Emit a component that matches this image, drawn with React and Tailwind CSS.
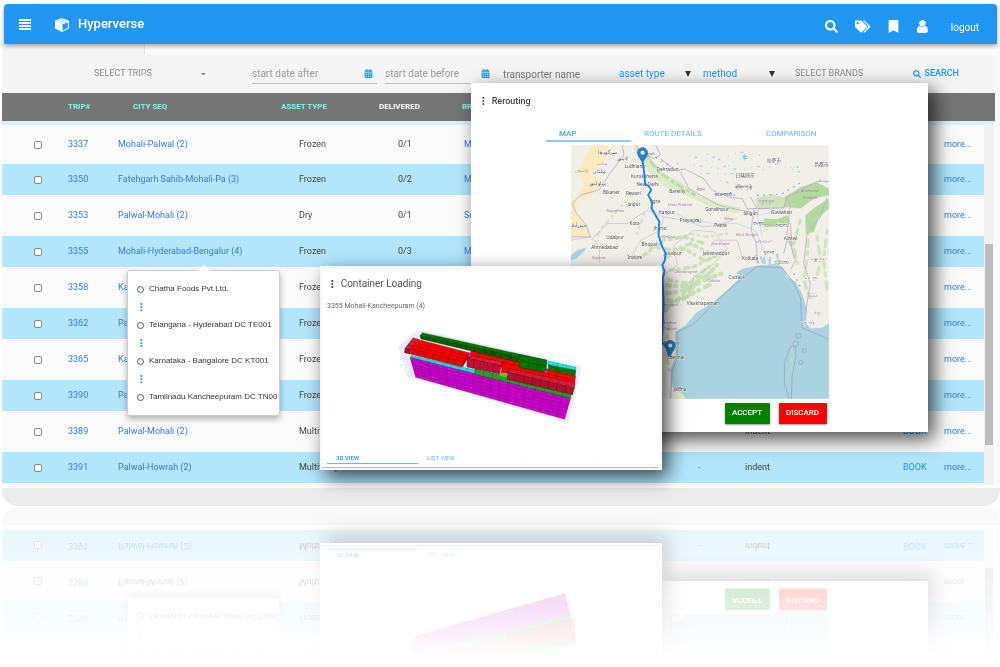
import React, { useState } from 'react';
import { FaSearch, FaTags, FaBookmark, FaCalendarAlt } from 'react-icons/fa';

const trips = [
  { id: 3337, city: 'Mohali-Palwal (2)', asset: 'Frozen', delivered: '0/1', brand: 'Mother' },
  { id: 3350, city: 'Fatehgarh Sahib-Mohali-Pa (3)', asset: 'Frozen', delivered: '0/2', brand: 'Mother' },
  { id: 3353, city: 'Palwal-Mohali (2)', asset: 'Dry', delivered: '0/1', brand: 'Subway' },
  { id: 3355, city: 'Mohali-Hyderabad-Bengalur (4)', asset: 'Frozen', delivered: '0/3', brand: 'Mother' },
  { id: 3358, city: 'Kashipur-Palwal (2)', asset: 'Frozen', delivered: '0/1', brand: 'Mother' },
  { id: 3362, city: 'Palwal-Mohali (2)', asset: 'Frozen', delivered: '0/1', brand: 'Mother' },
  { id: 3365, city: 'Kashipur-Palwal (2)', asset: 'Frozen', delivered: '0/1', brand: 'Mother' },
  { id: 3390, city: 'Palwal-Mohali (2)', asset: 'Frozen', delivered: '0/1', brand: 'Mother' },
  { id: 3389, city: 'Palwal-Mohali (2)', asset: 'Multitemp', delivered: '0/1', brand: 'Mother' },
  { id: 3391, city: 'Palwal-Howrah (2)', asset: 'Multitemp', delivered: '0/1', brand: 'Mother' },
];

const stops = [
  'Chatha Foods Pvt.Ltd.',
  'Telangana - Hyderabad DC TE001',
  'Karnataka - Bangalore DC KT001',
  'Tamilnadu Kancheepuram DC TN00',
];

// [name, x, y]
const cities = [
  ['Ludhiana', 192, 82], ['Dehradun', 288, 92], ['Kurukshetra', 211, 113], ['New Delhi', 228, 136],
  ['Bikaner', 127, 160], ['Rewari', 196, 163], ['Bareilly', 326, 159], ['Agra', 268, 188],
  ['Jaipur', 201, 196], ['Kanpur', 295, 222], ['Gorakhpur', 434, 213], ['Prayagraj', 358, 245],
  ['Kota', 207, 254], ['Jhansi', 279, 269], ['Patna', 461, 260], ['Siliguri', 549, 224],
  ['Guwahati', 632, 221], ['Udaipur', 137, 296], ['Bhopal', 243, 317], ['Jabalpur', 309, 344],
  ['Jamshedpur', 427, 344], ['Ahmedabad', 92, 325], ['Indore', 201, 356], ['Kolkata', 545, 360],
  ['Aizawl', 670, 300], ['Cuttack', 504, 417], ['Visakhapatnam', 379, 494], ['Chennai', 318, 658],
  ['Nellore', 310, 615], ['Jaffna', 340, 752], ['拉萨市', 620, 65], ['日喀则市', 526, 109], ['昌都市', 762, 77],
  ['سرگودھا', 112, 42], ['لاہور', 170, 58], ['ملتان', 97, 97], ['بہاولپور', 86, 135],
  ['حیدرآباد', 31, 260], ['གཞིས་ཀ་རྩེ', 524, 145], ['काठमाण्डौ', 462, 167], ['রংপুর', 578, 255], ['সিলেট', 648, 261],
  ['খুলনা', 608, 340], ['চট্টগ্রাম', 645, 372], ['မန္တလေး', 750, 358], ['မကွေး', 732, 417], ['ရန်ကုန်', 722, 553], ['ပဲခူး', 762, 521],
];

const states = [
  ['Punjab', 245, 45], ['پنجاب', 110, 73], ['پاکستان', 42, 95], ['Rajasthan', 138, 215], ['Uttar Pradesh', 322, 197],
  ['Bihar', 491, 240], ['West Bengal', 526, 288], ['Jharkhand', 452, 314], ['Madhya', 302, 293],
  ['Gujarat', 94, 355], ['Chhattisgarh', 342, 400], ['Odisha', 442, 425],
  ['Telangana', 296, 498], ['Andhra', 308, 551], ['Pradesh', 308, 571], ['Arunachal', 722, 156], ['Pradesh', 728, 176],
  ['नेपाल', 408, 152], ['འབྲུག་ཡུལ', 592, 188], ['বাংলাদেশ', 586, 308], ['မြန်မာ', 745, 470],
];

const lerp = (a, b, t) => [a[0] + (b[0] - a[0]) * t, a[1] + (b[1] - a[1]) * t];

// One face of stacked cartons: corners clockwise from top left, with grid lines
const Face = ({ pts, fill, cols = 1, rows = 1 }) => {
  const [tl, tr, br, bl] = pts;
  const lines = [];
  for (let i = 1; i < cols; i++) {
    lines.push([lerp(tl, tr, i / cols), lerp(bl, br, i / cols)]);
  }
  for (let i = 1; i < rows; i++) {
    lines.push([lerp(tl, bl, i / rows), lerp(tr, br, i / rows)]);
  }
  return (
    <g stroke="#000" strokeOpacity="0.5" strokeWidth="1.2">
      <polygon points={pts.map((p) => p.join(',')).join(' ')} fill={fill} />
      {lines.map(([a, b], i) => (
        <line key={i} x1={a[0]} y1={a[1]} x2={b[0]} y2={b[1]} />
      ))}
    </g>
  );
};

const LoadDrawing = () => (
  <svg viewBox="0 0 570 330" className="w-[190px]" role="img" aria-label="Loaded container">
    <polygon points="70,28 560,138 522,307 38,170 12,80" fill="#e9eef9" />
    <path d="M70 28 48 44 12 80 38 170 62 172M24 78 50 168M40 56 66 160" fill="none" stroke="#d5dbee" strokeWidth="1.5" />
    <Face pts={[[48, 106], [240, 150], [240, 163], [48, 116]]} fill="#00e5e5" cols={8} />
    <Face pts={[[45, 112], [527, 234], [509, 298], [62, 172]]} fill="#cc00cc" cols={18} rows={6} />
    <Face pts={[[240, 146], [530, 218], [527, 235], [240, 163]]} fill="#21a121" cols={11} />
    <Face pts={[[230, 90], [542, 168], [538, 196], [216, 116]]} fill="#ff0000" cols={12} rows={2} />
    <Face pts={[[322, 128], [380, 140], [345, 160], [318, 160]]} fill="#ff0000" cols={2} rows={2} />
    <Face pts={[[82, 38], [455, 120], [453, 132], [75, 48]]} fill="#067306" cols={14} />
    <Face pts={[[75, 47], [375, 113], [372, 127], [78, 57]]} fill="#005c00" cols={11} />
    <Face pts={[[375, 104], [456, 121], [453, 158], [372, 142]]} fill="#067306" cols={3} rows={2} />
    <Face pts={[[460, 123], [543, 142], [542, 152], [458, 134]]} fill="#00f0f0" cols={3} />
    <Face pts={[[460, 134], [542, 151], [541, 167], [460, 151]]} fill="#067306" cols={3} />
    <rect x="450" y="150" width="6" height="9" fill="#f0f" />
    <rect x="222" y="99" width="5" height="9" fill="#f0f" />
    <Face pts={[[230, 108], [322, 126], [318, 138], [218, 116]]} fill="#e02040" cols={5} />
    <Face pts={[[217, 114], [318, 137], [315, 163], [215, 141]]} fill="#bd1236" cols={5} />
    <polygon points="314,160 336,163 336,173 314,168" fill="#49d018" />
    <Face pts={[[346, 146], [540, 189], [538, 205], [338, 158]]} fill="#d51c3c" cols={8} />
    <Face pts={[[338, 156], [538, 204], [533, 224], [336, 178]]} fill="#b10f30" cols={8} />
    <Face pts={[[64, 57], [222, 98], [206, 126], [44, 88]]} fill="#ff0000" cols={7} rows={3} />
    <Face pts={[[46, 87], [206, 125], [202, 141], [46, 102]]} fill="#ef0000" cols={7} />
    <Face pts={[[222, 97], [218, 116], [202, 141], [206, 124]]} fill="#c80000" cols={2} />
    <Face pts={[[54, 53], [70, 58], [44, 89], [30, 85]]} fill="#d41f42" rows={3} />
    <Face pts={[[30, 85], [45, 88], [45, 103], [28, 98]]} fill="#a80f2e" />
  </svg>
);

const Pin = ({ x, y }) => (
  <g transform={`translate(${x} ${y})`}>
    <path d="M0 0C-2-13-15-21-15-34a15 15 0 0 1 30 0C15-21 2-13 0 0Z" fill="#2a81cb" stroke="#1f6fae" strokeWidth="2" />
    <circle cx="0" cy="-34" r="6" fill="#fff" />
  </g>
);

const RouteMap = () => (
  <svg viewBox="31 14 775 762" className="mx-auto block w-[258px]" role="img" aria-label="Route map">
    <rect x="31" y="14" width="775" height="762" fill="#f2efe9" />
    {/* Desert and forest cover */}
    <path d="M95 14h50l-15 45-45 45 50 15-25 30-35 30-25-5 20-45-20-30zM31 185l25-5-12 30 40 60 5 20-58-2z" fill="#fbe9bf" />
    <path d="M215 20l45 20 40 55 60 30 50 40 70 25 60 12-5 18-75-15-70-35-75-30-50-45z" fill="#dbebc8" />
    <path d="M230 25l30 25 35 45 50 35 60 35" fill="none" stroke="#bcdba4" strokeWidth="9" strokeDasharray="26 9 12 6" />
    <path d="M672 170l50-30 45-15 39 20v20l-45 10-40 30-50-5zM610 235l40 2 30-12 10 20-40 14-40 2zM735 225l30-25 41-25v30l-30 25-15 45-25 5z" fill="#b3d9a1" />
    <path d="M585 175l45-14 45 12-4 30-80 2z" fill="#cfe4bd" />
    <g fill="none" stroke="#bfdfac" strokeLinecap="round">
      <path d="M215 165l-40 40-45 50-25 40M250 220l-20 60M330 300l60-20 50 10 60-10" strokeWidth="8" strokeDasharray="3 17 10 13" opacity="0.6" />
      <path d="M250 345l60-45 60-10 60 20M320 350l50-25 60 35M330 390l70-10 80-40M325 420l60 10 60-50M270 320l70 10 50-20 60 30" strokeWidth="11" strokeDasharray="8 15 2 18 14 12" opacity="0.8" />
      <path d="M320 460l60-10 60-35 60-20M350 480l50-40 30-45M315 510l30-25M320 435l70 5 50-35 30-30M325 480l30 5 40-25 60-30" strokeWidth="13" strokeDasharray="9 15 3 19 16 12" opacity="0.85" />
      <path d="M720 240l-20 70 10 60M745 270l-5 90-10 60 20 60M770 290l10 70-10 50M690 300l15 60M800 270l-10 90 10 90" strokeWidth="9" strokeDasharray="10 18 22 14" opacity="0.7" />
      <path d="M325 560l-10 60 10 70M345 765l25 8" strokeWidth="10" strokeDasharray="8 18" opacity="0.8" />
    </g>
    {/* Lakes and rivers */}
    <g fill="none" stroke="#9fd6e6" strokeWidth="4" strokeDasharray="3 15 8 26 2 19">
      <path d="M385 45l70 20 80-30 70 10M400 75l80 10 60-30M440 40l90 50 90-15M560 110l90-40 80 30M420 100l100 0" />
      <path d="M690 80l50 0M330 60l30 15M480 120l80 25" />
    </g>
    <path d="M545 48h16M548 54h12M552 42v18" stroke="#8accdf" strokeWidth="4" />
    <path d="M310 205l70 30 80 15 70 0 55 20 25 60 20 45M700 190l-50 25-60 10 15 60" fill="none" stroke="#c5dfe9" strokeWidth="3" />
    {/* Sea */}
    <path d="M375 776l-38-35-8-50 15-40 0-75 32-22 30-35 55-35 45-40 32-30-10-17 20-12 50-10 20 0 30-5 20 12 12 28 25 15 20 35 15 50-3 40 15 15 35-3 20-14 19-25V776z" fill="#aad3df" />
    <path d="M31 345l20-15 25-8-5 12-25 22-15 4z" fill="#aad3df" />
    <path d="M337 776l3-15 12-8 15 10 10 13z" fill="#e4ecd2" />
    <path d="M585 345l8 25M610 350l4 22M630 350l-3 24M650 340l5 34M600 348l8 22" stroke="#aad3df" strokeWidth="6" />
    {/* Borders */}
    <g fill="none" stroke="#c0a8c6" strokeWidth="2.5">
      <path d="M185 14l5 30-45 60-30 45-55 15-25 25 12 30 30 35 12 36-58 0M225 14l15 22 40 18 20-10 -15-30M300 55l50 38 20-8 60 30 25 35 50 20 40 5 15 30 60 0M360 95l25 50 90 50 95 22M570 170l20 35 80-2 8-30 55-30 40-20 33 0M580 210l-8 60 15 40 5 60M590 250l50 5 50-5 5 70-15-20-10 40M690 190l-10 90 25 80-15 30M800 170l-20 60-40 50-10 90 20 60-15 90" />
      <path d="M31 300l60-10 25 30 0 45M90 300l50-50 60 0 60-40 50 20-10 40-60 30-30 55M310 230l60 10 60 20 40-5 60-20M400 270l-60 45 10 60-40 30M400 270l60 5 40 50-40 45-60 40-20 60-60 20M460 300l70 0 15 50" strokeWidth="2" opacity="0.75" />
    </g>
    <g fill="none" stroke="#98a6c8" strokeWidth="2.5">
      <path d="M330 776l5-80 15-45 0-75 50-25 60-60 65-60 65-52 75 4 35 45 20 45 5 90 81 35" />
      <path d="M690 620l15 0 2 30-12 60-2 66M690 620l-18 50 0 60 14 46" />
      <circle cx="714" cy="587" r="8" />
      <circle cx="706" cy="611" r="8" />
      <circle cx="732" cy="631" r="6" />
      <circle cx="721" cy="667" r="6" />
    </g>
    <path d="M695 625l-3 40-6 50" fill="none" stroke="#c3d8b8" strokeWidth="5" strokeDasharray="14 12" />
    <path d="M270 40l30 20 50 30 20 0M500 165l30 0M590 165l60-3M665 160l60-35M800 125l-25-5M700 400l22 45" fill="none" stroke="#7eabff" strokeWidth="4" strokeDasharray="5 14" />
    <g fontFamily='"Noto Sans", "Noto Sans CJK SC", sans-serif' fontSize="14">
      <g fill="#a57fae" fontStyle="italic" fontSize="12">
        {states.map(([name, x, y]) => (
          <text key={`${x}-${y}`} x={x} y={y}>{name}</text>
        ))}
      </g>
      <g fill="#444" stroke="#fff" strokeWidth="2" paintOrder="stroke">
        {cities.map(([name, x, y]) => (
          <text key={name} x={x} y={y}>{name}</text>
        ))}
      </g>
    </g>
    {/* Route */}
    <path d="M247 68l4 32 3 33 10 4 8 12-9 15 12 22-2 18 14 25 9 14-2 42 11 35 10 18-2 22-8 16 7 16-6 25 3 70-5 120 14 14 8 28" fill="none" stroke="#2a80ff" strokeWidth="6" strokeLinejoin="round" />
    <Pin x={246} y={71} />
    <Pin x={329} y={650} />
  </svg>
);

const Dots = ({ className }) => (
  <svg viewBox="0 0 3 9" className={className} fill="currentColor" aria-hidden="true">
    <rect width="2" height="2" x="0.5" />
    <rect width="2" height="2" x="0.5" y="3.5" />
    <rect width="2" height="2" x="0.5" y="7" />
  </svg>
);

const MenuIcon = () => (
  <svg viewBox="0 0 12 11" className="w-3" fill="currentColor" aria-hidden="true">
    <path d="M0 0h12v2H0zM0 3h12v2H0zM0 6h12v2H0zM0 9h12v2H0z" />
  </svg>
);

const CubeIcon = () => (
  <svg viewBox="0 0 1792 1792" className="size-[15px]" fill="currentColor" aria-hidden="true">
    <path d="M896 1629l640-349v-636l-640 233v752zm-64-865l698-254-698-254-698 254zm832-252v768q0 35-18 65t-49 47l-704 384q-28 16-61 16t-61-16l-704-384q-31-17-49-47t-18-65v-768q0-40 23-73t61-47l704-256q22-8 44-8t44 8l704 256q38 14 61 47t23 73z" />
    <path d="M832 764l698-254-698-254-698 254z" fillOpacity="0.85" />
  </svg>
);

const UserIcon = () => (
  <svg viewBox="256 128 1280 1536" className="h-[13px]" fill="currentColor" aria-hidden="true">
    <path d="M1536 1399q0 109-62.5 187t-150.5 78h-854q-88 0-150.5-78t-62.5-187q0-85 8.5-160.5t31.5-152 58.5-131 94-89 134.5-34.5q131 128 313 128t313-128q76 0 134.5 34.5t94 89 58.5 131 31.5 152 8.5 160.5zm-256-887q0 159-112.5 271.5t-271.5 112.5-271.5-112.5-112.5-271.5 112.5-271.5 271.5-112.5 271.5 112.5 112.5 271.5z" />
  </svg>
);

const Header = () => (
  <header className="relative z-10 mr-[3px] ml-1 flex h-10 items-center rounded-t bg-[#2196f3] pr-[18px] pl-[15px] text-white shadow-[0_2px_4px_rgba(0,0,0,0.35)]">
    <button aria-label="Menu">
      <MenuIcon />
    </button>
    <a href="#" className="ml-6 flex items-center gap-2 text-[13px] font-medium">
      <CubeIcon />
      Hyperverse
    </a>
    <nav className="ml-auto flex items-center gap-[17px] pt-1">
      <button aria-label="Search"><FaSearch className="size-[13px]" /></button>
      <button aria-label="Tags"><FaTags className="size-[15px]" /></button>
      <button aria-label="Bookmarks"><FaBookmark className="size-[13px]" /></button>
      <button aria-label="User"><UserIcon /></button>
      <a href="#" className="ml-1.5 pt-0.5 text-[10px]">logout</a>
    </nav>
  </header>
);

const DateFilter = ({ label, className }) => (
  <label className={`flex h-5 items-center border-b border-[#bdbdbd] ${className}`}>
    <input type="text" aria-label={label} placeholder={label} className="w-full min-w-0 text-[10px] outline-none placeholder:text-[#9a9a9a]" />
    <FaCalendarAlt className="size-[9px] shrink-0 text-[#2196f3]" />
  </label>
);

const SelectFilter = ({ label }) => (
  <div className="relative h-4 w-[72px]">
    <select aria-label={label} className="block h-4 w-full appearance-none text-[10px] leading-4 text-[#2196f3]">
      <option>{label}</option>
    </select>
    <svg viewBox="0 0 6 6" className="pointer-events-none absolute top-[5px] right-0 size-[6px]" fill="#333" aria-hidden="true">
      <path d="M0 0h6L3 6z" />
    </svg>
  </div>
);

const Filters = () => (
  <form className="flex items-center bg-[#f5f5f5] pt-[9px] pb-[9px] pl-[92px]" onSubmit={(e) => e.preventDefault()}>
    <button type="button" className="flex w-[116px] items-center justify-between text-[9px] text-[#888]">
      SELECT TRIPS
      <svg viewBox="0 0 6 3" className="mr-1 w-[5px]" fill="#888" aria-hidden="true"><path d="M0 0h6L3 3z" /></svg>
    </button>
    <div className="ml-[42px] flex gap-2">
      <DateFilter label="start date after" className="w-[125px] pr-1" />
      <DateFilter label="start date before" className="w-[106px] pr-px" />
    </div>
    <input type="text" aria-label="transporter name" placeholder="transporter name" className="ml-3 w-[116px] text-[10px] outline-none placeholder:text-[#777]" />
    <div className="flex gap-3">
      <SelectFilter label="asset type" />
      <SelectFilter label="method" />
    </div>
    <button type="button" className="ml-5 text-[9px] text-[#888]">SELECT BRANDS</button>
    <button className="mr-9 ml-auto flex items-center gap-1 text-[9px] font-medium text-[#2196f3]">
      <FaSearch className="size-2" />
      SEARCH
    </button>
  </form>
);

const TripsTable = () => (
  <div className="relative pb-[2px]">
    <table className="w-full table-fixed border-collapse text-left text-[9px] text-[#444]">
      <colgroup>
        <col className="w-[66px]" />
        <col className="w-[50px]" />
        <col className="w-[163px]" />
        <col className="w-[98px]" />
        <col className="w-[83px]" />
        <col />
        <col className="w-[47px]" />
        <col className="w-[158px]" />
        <col className="w-[41px]" />
        <col className="w-[51px]" />
      </colgroup>
      <thead>
        <tr className="h-[30px] bg-[#757575] text-[8px] text-[#80f5e8]">
          <th></th>
          <th>TRIP#</th>
          <th className="pl-[15px]">CITY SEQ</th>
          <th>ASSET TYPE</th>
          <th className="text-white">DELIVERED</th>
          <th>BRAND</th>
          <th></th>
          <th></th>
          <th></th>
          <th></th>
        </tr>
      </thead>
      <tbody className="border-t-4 border-[#d8f2fd]">
        {trips.map((trip) => (
          <tr key={trip.id} className="h-[41px] bg-[#fbfbfb] even:h-[31px] even:bg-[#b3e5fc]">
            <td className="pl-8 align-middle">
              <input
                type="checkbox"
                aria-label={`Trip ${trip.id}`}
                className="block size-2 appearance-none rounded-[2px] border border-[#888] bg-white"
              />
            </td>
            <td><a href="#" className="text-[#3b7ad0]">{trip.id}</a></td>
            <td><a href="#" className="text-[#3b7ad0]">{trip.city}</a></td>
            <td className="pl-[18px]">{trip.asset}</td>
            <td className="pl-[19px]">{trip.delivered}</td>
            <td><a href="#" className="pl-0.5 text-[#3b7ad0]">{trip.brand}</a></td>
            <td className="text-[#2196f3]">-</td>
            <td>indent</td>
            <td><button className="text-[#2196f3]">BOOK</button></td>
            <td><a href="#" className="text-[#3b7ad0]">more...</a></td>
          </tr>
        ))}
      </tbody>
    </table>
    <div className="absolute top-[31px] right-0 bottom-0 w-[11px] border-r border-white bg-[#f1f1f1] pt-[120px]">
      <div className="mx-px h-[201px] bg-[#bcbcbc]" />
    </div>
  </div>
);

const StopsPopover = () => (
  <div className="absolute top-[270px] left-[127px] w-[153px] rounded-[3px] border border-[#ccc] bg-white py-[9px] pl-[9px] shadow-[0_3px_6px_rgba(0,0,0,0.3)]">
    <svg viewBox="0 0 12 6" className="absolute -top-[6px] left-[70px] w-3" aria-hidden="true">
      <path d="M0 6 6 0l6 6z" fill="#fff" />
    </svg>
    <ul className="font-['Liberation_Sans',sans-serif] text-[8px] leading-[18px] whitespace-nowrap text-[#333]">
      {stops.map((stop, i) => (
        <React.Fragment key={stop}>
          {i > 0 && (
            <li className="flex h-[18px] items-center pl-[3px] text-[#2196f3]">
              <Dots className="h-2" />
            </li>
          )}
          <li className="flex items-center gap-[5px]">
            <span className="size-[7px] rounded-full border border-[#555]" />
            {stop}
          </li>
        </React.Fragment>
      ))}
    </ul>
  </div>
);

const Rerouting = () => {
  const [tab, setTab] = useState('MAP');
  const line = (name) => (tab === name ? 'border-[#90caf9]' : 'border-transparent');

  return (
    <section className="absolute top-[83px] left-[471px] w-[457px] bg-white pt-3 pb-2 shadow-[6px_7px_18px_rgba(0,0,0,0.7)]">
      <h2 className="flex items-center gap-[7px] pl-[11px] text-[9px] leading-3 font-medium text-[#444]">
        <Dots className="h-2" />
        Rerouting
      </h2>
      <div className="mt-[17px] ml-[75px] flex h-[18px] text-[8px] text-[#64b5f6]">
        <button onClick={() => setTab('MAP')} className={`w-[85px] border-b-2 pt-1 pl-[13px] text-left font-medium text-[#42a5f5] ${line('MAP')}`}>MAP</button>
        <button onClick={() => setTab('ROUTE')} className={`w-[122px] border-b-2 pt-1 pl-[13px] text-left ${line('ROUTE')}`}>ROUTE DETAILS</button>
        <button onClick={() => setTab('COMPARISON')} className={`w-[75px] border-b-2 pt-1 pl-[13px] text-left ${line('COMPARISON')}`}>COMPARISON</button>
      </div>
      <div className="mt-[3px]">
        <RouteMap />
      </div>
      <div className="mx-auto mt-1 flex w-[258px] justify-end gap-[9px] pr-0.5 text-[8px] font-medium text-white">
        <button className="h-[21px] w-[45px] rounded-[1px] bg-[#008000] shadow-[0_1px_2px_rgba(0,0,0,0.4)]">ACCEPT</button>
        <button className="h-[21px] w-12 rounded-[1px] bg-[#ff0000] shadow-[0_1px_2px_rgba(0,0,0,0.4)]">DISCARD</button>
      </div>
    </section>
  );
};

const ContainerLoading = () => (
  <section className="absolute top-[266px] left-[320px] w-[342px] border-2 border-[#f8f8f8] bg-white pt-[9px] shadow-[6px_7px_18px_rgba(0,0,0,0.7)]">
    <h2 className="flex items-center gap-[7px] pl-[9px] text-[10px] leading-[14px] text-[#555]">
      <Dots className="h-2 text-[#333]" />
      Container Loading
    </h2>
    <p className="mt-[9px] pl-[5px] text-[7px] leading-3 text-[#666]">3355 Mohali-Kancheepuram (4)</p>
    <div className="mt-2 pl-[73px]">
      <LoadDrawing />
    </div>
    <div className="mr-0.5 flex h-[38px] items-end border-b border-[#bbb] pb-[3px] pl-[5px] text-[6px] text-[#64b5f6]">
      <button className="w-[91px] border-b border-[#64b5f6] pb-px pl-[9px] text-left font-medium text-[#2196f3]">3D VIEW</button>
      <button className="w-[104px] border-b border-transparent pb-px pl-[9px] text-left">LIST VIEW</button>
      <span className="w-[70px] pb-0.5">.</span>
      <span className="pb-0.5">.</span>
    </div>
  </section>
);

export default function App() {
  return (
    <div className="min-h-screen overflow-hidden bg-white font-[Roboto,sans-serif]">
      <div className="relative pt-1 [-webkit-box-reflect:below_1px_linear-gradient(transparent_70%,rgba(255,255,255,0.36))]">
        <Header />
        <main className="ml-0.5 rounded-b-2xl bg-[#ececec] pb-[18px]">
          <div className="border-b-[3px] border-white bg-[#fafafa] pr-[5px]">
            <div className="h-[11px] w-[143px] border-r border-[#e5e5e5] bg-[#f5f5f5]" />
            <Filters />
            <TripsTable />
          </div>
        </main>
        <StopsPopover />
        <Rerouting />
        <ContainerLoading />
      </div>
    </div>
  );
}
